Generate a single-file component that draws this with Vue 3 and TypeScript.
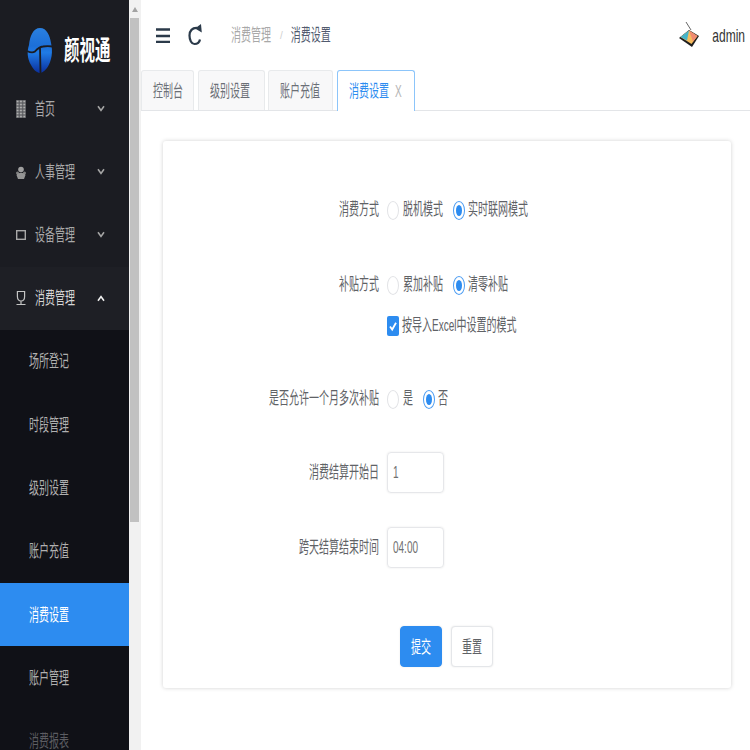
<script setup lang="ts">
import { ref } from 'vue'

const topMenus = [
  { name: '首页', icon: 'grid' },
  { name: '人事管理', icon: 'people' },
  { name: '设备管理', icon: 'box' }
]
const subMenus = ['场所登记', '时段管理', '级别设置', '账户充值', '消费设置', '账户管理', '消费报表']
const tabs = ['控制台', '级别设置', '账户充值']

const payMode = ref('online')
const subsidyMode = ref('clear')
const useExcel = ref(true)
const multiSubsidy = ref('no')
const startDay = ref('1')
const endTime = ref('04:00')
</script>

<template>
  <div class="page">
    <aside class="sidebar">
      <div class="logo">
        <svg class="logo_mark" viewBox="0 0 26 46">
          <defs>
            <linearGradient id="egg" x1="0" y1="0" x2="0" y2="1">
              <stop offset="0" stop-color="#2a80e0" />
              <stop offset="0.4" stop-color="#1c6fd8" />
              <stop offset="0.55" stop-color="#1f7be6" />
              <stop offset="1" stop-color="#0b2f9c" />
            </linearGradient>
            <pattern id="dots" width="3.300" height="3" patternUnits="userSpaceOnUse">
              <circle cx="1.650" cy="1.500" r="1.050" fill="#b0b0b0" />
            </pattern>
          </defs>
          <path d="M13 1 C20 1 23 9 24 16 C26 24 25 34 20 41 C17 45 14 46 13 46 C11 46 7 44 4 38 C0 31 0 24 2 18 C3 9 6 1 13 1 Z" fill="url(#egg)" />
          <path d="M0 24 C3 25.500 6 26 8 24.500 C10 22 12 20 16 19.500 C19 19 22 19 26 19.500 M13 20 L13.500 46" fill="none" stroke="#1b1c22" stroke-width="1.800" />
        </svg>
        <span class="logo_text">颜视通</span>
      </div>
      <div v-for="m in topMenus" :key="m.name" class="menu_row">
        <svg v-if="m.icon === 'grid'" class="menu_icon" viewBox="0 0 10 18">
          <rect width="10" height="18" fill="#5d5e62" />
          <rect width="10" height="18" fill="url(#dots)" />
        </svg>
        <svg v-else-if="m.icon === 'people'" class="menu_icon" viewBox="0 0 10 18">
          <circle cx="5" cy="6.500" r="2.800" fill="#a0a0a0" />
          <circle cx="1.500" cy="10" r="1.500" fill="#808080" />
          <circle cx="8.500" cy="10" r="1.500" fill="#808080" />
          <path d="M0.500 12 C2 9 8 9 9.500 12 L8 16 L2 16 Z" fill="#959595" />
        </svg>
        <svg v-else class="menu_icon" viewBox="0 0 10 18">
          <rect x="0.700" y="4.700" width="8.600" height="8.600" fill="none" stroke="#a8a8a8" stroke-width="1.400" />
        </svg>
        <span class="t menu_text">{{ m.name }}</span>
        <svg class="chevron" viewBox="0 0 8 7">
          <path d="M1 1.200 L4 5.400 L7 1.200" fill="none" stroke="#a5a5a5" stroke-width="1.600" />
        </svg>
      </div>
      <div class="menu_row menu_open">
        <svg class="menu_icon" viewBox="0 0 10 18">
          <path d="M1.400 2.500h7.200v5c0 3-1.600 4.500-3.600 4.500S1.400 10.500 1.400 7.500zM5 12v3M0.500 15.500h9" fill="none" stroke="#c4c4c4" stroke-width="1.200" />
        </svg>
        <span class="t menu_text">消费管理</span>
        <svg class="chevron" viewBox="0 0 8 7">
          <path d="M1 5.800 L4 1.600 L7 5.800" fill="none" stroke="#f0f0f0" stroke-width="1.600" />
        </svg>
      </div>
      <div class="submenu">
        <div
          v-for="(s, i) in subMenus"
          :key="s"
          class="sub_row"
          :class="{ sub_active: s === '消费设置', sub_dim: i === subMenus.length - 1 }"
        >
          <span class="t">{{ s }}</span>
        </div>
      </div>
    </aside>

    <div class="scrollbar">
      <div class="scroll_arrow"></div>
      <div class="scroll_thumb"></div>
    </div>

    <main class="main">
      <header class="topbar">
        <svg class="hamburger" viewBox="0 0 14 15">
          <path d="M0 1.500h14M0 8h14M0 14h14" stroke="#2b3a4a" stroke-width="2.400" />
        </svg>
        <svg class="refresh" viewBox="0 0 14 22">
          <path d="M9.500 4 C4 3.500 1.500 7 1.500 11.500 C1.500 16 3.500 20 6.500 20 C9.500 20 11.500 18 12 15.500" fill="none" stroke="#2b3a4a" stroke-width="2.200" />
          <path d="M7 4.500 L13 0 L13.800 8.500 Z" fill="#2b3a4a" />
        </svg>
        <div class="crumb">
          <span class="t crumb_prev">消费管理</span>
          <span class="crumb_sep">/</span>
          <span class="t crumb_cur">消费设置</span>
        </div>
        <div class="user">
          <svg class="avatar" viewBox="0 0 20 26">
            <path d="M7 0 L12 8" stroke="#666" stroke-width="1" />
            <path d="M0 16 L10 8 L20 14 L13 25 Z" fill="#1e1e1e" />
            <path d="M1.500 15 L10 8.500 L18.500 14 L12.500 22 Z" fill="#f6bc5c" />
            <path d="M1.500 15 L10 8.500 L8 18.500 Z" fill="#45b4c9" />
            <path d="M10 8.500 L18.500 14 L14 19.500 Z" fill="#f08a72" />
          </svg>
          <span class="t user_name">admin</span>
        </div>
      </header>

      <nav class="tabbar">
        <div v-for="t in tabs" :key="t" class="tab"><span class="t">{{ t }}</span></div>
        <div class="tab tab_active">
          <span class="t">消费设置</span>
          <span class="t tab_close">X</span>
        </div>
      </nav>

      <section class="content">
        <form class="card" @submit.prevent>
          <div class="form_row">
            <label class="t form_label">消费方式</label>
            <div class="form_ctrl">
              <span class="radio" :class="{ on: payMode === 'offline' }" @click="payMode = 'offline'"></span>
              <span class="t opt">脱机模式</span>
              <span class="radio" :class="{ on: payMode === 'online' }" @click="payMode = 'online'"></span>
              <span class="t opt">实时联网模式</span>
            </div>
          </div>

          <div class="form_row row_subsidy">
            <label class="t form_label">补贴方式</label>
            <div class="form_ctrl">
              <span class="radio" :class="{ on: subsidyMode === 'add' }" @click="subsidyMode = 'add'"></span>
              <span class="t opt">累加补贴</span>
              <span class="radio" :class="{ on: subsidyMode === 'clear' }" @click="subsidyMode = 'clear'"></span>
              <span class="t opt">清零补贴</span>
            </div>
          </div>

          <div class="form_row row_check">
            <span class="form_label"></span>
            <div class="form_ctrl">
              <span class="check" @click="useExcel = !useExcel">
                <svg v-if="useExcel" viewBox="0 0 12 20" preserveAspectRatio="none">
                  <path d="M3 10.500 L5.200 13.500 L9 6.800" fill="none" stroke="#fff" stroke-width="1.800" />
                </svg>
              </span>
              <span class="t check_text">按导入Excel中设置的模式</span>
            </div>
          </div>

          <div class="form_row row_multi">
            <label class="t form_label">是否允许一个月多次补贴</label>
            <div class="form_ctrl">
              <span class="radio" :class="{ on: multiSubsidy === 'yes' }" @click="multiSubsidy = 'yes'"></span>
              <span class="t opt">是</span>
              <span class="radio" :class="{ on: multiSubsidy === 'no' }" @click="multiSubsidy = 'no'"></span>
              <span class="t opt">否</span>
            </div>
          </div>

          <div class="form_row row_day">
            <label class="t form_label">消费结算开始日</label>
            <div class="form_ctrl">
              <div class="input"><span class="t">{{ startDay }}</span></div>
            </div>
          </div>

          <div class="form_row row_time">
            <label class="t form_label">跨天结算结束时间</label>
            <div class="form_ctrl">
              <div class="input"><span class="t">{{ endTime }}</span></div>
            </div>
          </div>

          <div class="form_actions">
            <button class="btn btn_primary" type="submit"><span class="t">提交</span></button>
            <button class="btn" type="reset"><span class="t">重置</span></button>
          </div>
        </form>
      </section>
    </main>
  </div>
</template>

<style>
html,
body {
  margin: 0;
  background: #fff;
  overflow: hidden;
}
</style>

<style scoped>
.page {
  display: flex;
  width: 750px;
  height: 750px;
  overflow: hidden;
  font-family: "Liberation Sans", "Noto Sans CJK SC", sans-serif;
  font-size: 10px;
  color: #606266;
}

/* the shot is squeezed sideways, so text is set narrow and stretched */
.t {
  display: inline-block;
  transform: translateY(1px) scaleY(1.650);
  line-height: 12px;
  white-space: nowrap;
}

.sidebar {
  width: 129px;
  flex-shrink: 0;
  background: #1b1c22;
  color: #a9a9a9;
}

.logo {
  height: 77px;
  padding: 27px 0 0 27px;
  box-sizing: border-box;
  display: flex;
  gap: 11px;
}

.logo_mark {
  width: 26px;
  height: 46px;
}

.logo_text {
  display: inline-block;
  margin-top: 16px;
  height: 15px;
  line-height: 15px;
  font-size: 15.500px;
  font-weight: 700;
  color: #fff;
  transform: scaleY(1.750);
  white-space: nowrap;
}

.menu_row {
  height: 63.200px;
  display: flex;
  align-items: center;
  padding: 0 24px 0 16px;
  box-sizing: border-box;
}

.menu_open {
  background: #1e1f25;
  color: #d6d6d6;
}

.menu_icon {
  width: 10px;
  height: 18px;
  margin-right: 9px;
}

.menu_text {
  flex: 1;
}

.chevron {
  width: 8px;
  height: 7px;
}

.submenu {
  background: #101117;
}

.sub_row {
  height: 63.300px;
  display: flex;
  align-items: center;
  padding-left: 29px;
  color: #b0b0b0;
}

.sub_active {
  background: #2d8cf0;
  color: #fff;
}

.sub_dim {
  color: #5c5d62;
}

.scrollbar {
  width: 12px;
  flex-shrink: 0;
  background: #f1f1f1;
}

.scroll_arrow {
  width: 0;
  height: 0;
  margin: 7px 0 6px 3px;
  border-left: 3px solid transparent;
  border-right: 3px solid transparent;
  border-bottom: 5px solid #a3a3a3;
}

.scroll_thumb {
  width: 9px;
  height: 504px;
  margin-left: 1px;
  background: #c1c1c1;
}

.main {
  flex: 1;
  min-width: 0;
}

.topbar {
  height: 70px;
  display: flex;
  align-items: center;
  padding: 0 5px 0 15px;
  box-sizing: border-box;
}

.hamburger {
  width: 14px;
  height: 15px;
}

.refresh {
  width: 14px;
  height: 22px;
  margin-left: 18px;
}

.crumb {
  display: flex;
  align-items: center;
  margin-left: 29px;
}

.crumb_prev {
  color: #a8a8a8;
}

.crumb_sep {
  margin: 0 8px 0 9px;
  color: #d0d0d0;
}

.crumb_cur {
  color: #515a6e;
}

.user {
  margin-left: auto;
  display: flex;
  align-items: center;
  gap: 13px;
}

.avatar {
  width: 20px;
  height: 26px;
}

.user_name {
  font-size: 12px;
  transform: translateY(1px) scaleY(1.550);
  color: #333;
}

.tabbar {
  height: 41px;
  display: flex;
  gap: 3px;
  box-sizing: border-box;
  border-bottom: 1px solid #e3e5e8;
}

.tab {
  height: 40px;
  padding: 0 12px 0 11px;
  display: flex;
  align-items: center;
  box-sizing: border-box;
  background: #f8f8f9;
  border: 1px solid #e8eaec;
  border-bottom: none;
  border-radius: 3px 3px 0 0;
  color: #6b6f76;
}

.tab:nth-child(1) {
  padding-right: 10px;
  margin-right: 1px;
}

.tab:nth-child(2) {
  padding-right: 14px;
}

.tab:nth-child(3) {
  margin-right: 1px;
}

.tab_active {
  height: 41px;
  background: #fff;
  border: 1px solid #8cc5fa;
  border-bottom: none;
  color: #2d8cf0;
}

.tab_close {
  margin-left: 6px;
  color: #b5b5b5;
}

.content {
  padding: 30px 19px 0 22px;
}

.card {
  padding: 48px 0 21px;
  background: #fff;
  border-radius: 3px;
  box-shadow: 0 0 4px rgba(0, 0, 0, 0.180);
}

.form_row {
  display: flex;
  align-items: center;
  height: 40px;
}

.row_subsidy {
  margin-top: 35px;
}

.row_check {
  margin-top: 1px;
}

.row_multi {
  margin-top: 33px;
}

.row_day {
  margin-top: 34px;
}

.row_time {
  margin-top: 35px;
}

.form_label {
  width: 216px;
  flex-shrink: 0;
  margin-right: 8px;
  text-align: right;
}

.form_ctrl {
  display: flex;
  align-items: center;
}

.radio {
  position: relative;
  width: 12px;
  height: 19px;
  margin: 2px 4px 0 0;
  box-sizing: border-box;
  border: 1.500px solid #e2e3e6;
  border-radius: 50%;
}

.radio.on {
  margin-right: 3px;
  border: 1px solid #4d9df2;
}

.radio.on::after {
  content: "";
  position: absolute;
  inset: 3px 2px;
  border-radius: 50%;
  background: #2d8cf0;
}

.opt {
  margin-right: 10px;
}

.check {
  width: 12px;
  height: 20px;
  margin: 2px 3px 0 0;
  border-radius: 2px;
  background: #2d8cf0;
}

.check svg {
  display: block;
  width: 12px;
  height: 20px;
}

.check_text {
  color: #606266;
}

.input {
  width: 57px;
  height: 41px;
  padding-left: 5px;
  display: flex;
  align-items: center;
  box-sizing: border-box;
  border: 1px solid #e6e7ea;
  border-radius: 4px;
  box-shadow: 0 0 2px rgba(0, 0, 0, 0.100);
  color: #707070;
}

.form_actions {
  display: flex;
  gap: 9px;
  margin-top: 59px;
  padding-left: 237px;
}

.btn {
  width: 42px;
  height: 41px;
  padding: 0;
  border: 1px solid #e4e6e9;
  border-radius: 4px;
  background: #fff;
  box-shadow: 0 0 2px rgba(0, 0, 0, 0.100);
  font: inherit;
  color: #606266;
}

.btn_primary {
  border-color: #2d8cf0;
  background: #2d8cf0;
  color: #fff;
}
</style>
